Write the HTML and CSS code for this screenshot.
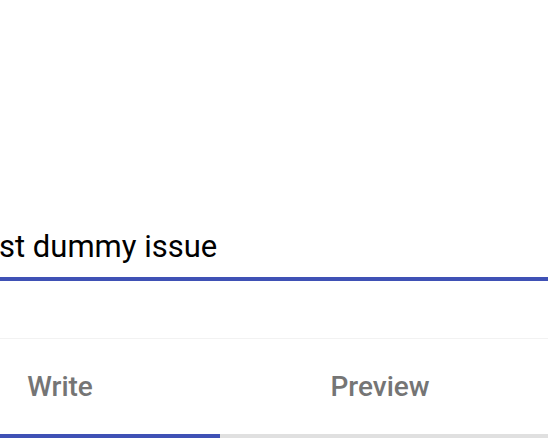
FILE: index.html
```html
<!DOCTYPE html>
<html>
<head>
<meta charset="utf-8">
<link rel="stylesheet" href="styles.css">
</head>
<body>
<div class="page">
  <div class="top">
    <div class="field">
      <div class="input">st dummy issue</div>
    </div>
  </div>
  <div class="tabs">
    <div class="tab active">Write</div>
    <div class="tab">Preview</div>
  </div>
</div>
</body>
</html>
```
FILE: styles.css
```css
html, body {
  margin: 0;
  padding: 0;
  width: 548px;
  height: 438px;
  overflow: hidden;
  background: #ffffff;
  font-family: Roboto, "Liberation Sans", sans-serif;
}
.page {
  margin-left: -100px;
  width: 648px;
}
.top {
  height: 338px;
  background: #ffffff;
  border-bottom: 1px solid #f2f2f2;
  display: flex;
  flex-direction: column;
  justify-content: flex-start;
}
.field {
  margin-top: 222px;
  padding-bottom: 5px;
  border-bottom: 4px solid #3f51b5;
}
.input {
  font-size: 31px;
  line-height: 50px;
  color: #000;
  padding-left: 99px;
  white-space: nowrap;
}
.tabs {
  display: flex;
  height: 95px;
  border-bottom: 4px solid #e0e0e0;
}
.tab {
  width: 320px;
  display: flex;
  align-items: center;
  justify-content: center;
  font-size: 28px;
  font-weight: 500;
  color: #757575;
  box-sizing: border-box;
}
.tab.active {
  border-bottom: 4px solid #3f51b5;
  margin-bottom: -4px;
}
```
